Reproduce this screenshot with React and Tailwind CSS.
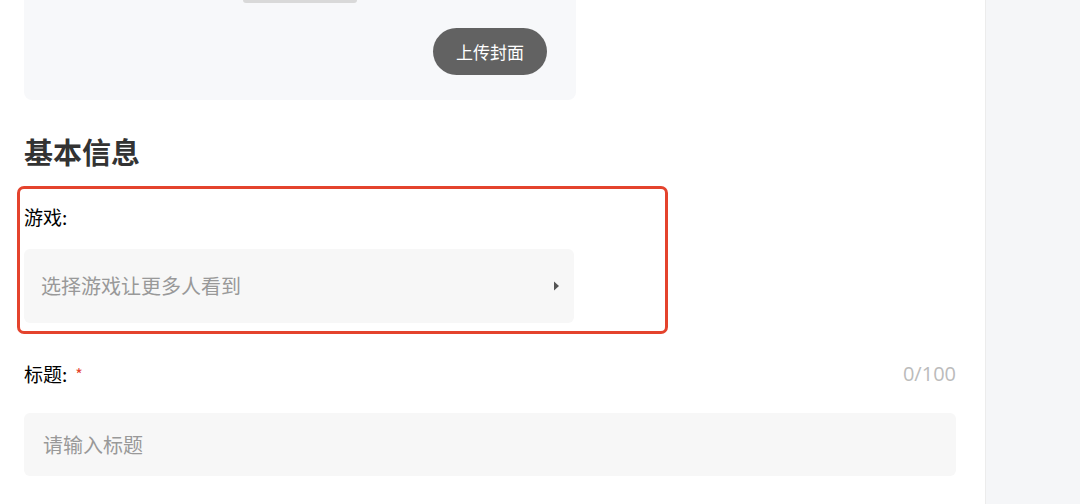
const font = { fontFamily: '"Noto Sans CJK SC", "Noto Sans", sans-serif' };

export default function App() {
  return (
    <div className="flex h-[504px] w-[1080px] overflow-hidden bg-white" style={font}>
      <div className="flex-1 pl-6 pr-[29px]">
        {/* cover */}
        <div className="flex h-[100px] w-[552px] flex-col rounded-b-lg bg-[#f7f8fa]">
          <div className="ml-[219px] h-[3px] w-[114px] rounded-b-md bg-[#d9d9d9]" />
          <button className="mt-[25px] mr-[29px] h-[47px] w-[114px] self-end rounded-full bg-[#626262] text-[17px] text-white">
            上传封面
          </button>
        </div>

        <h2 className="mt-[31px] text-[29px] leading-[40px] font-bold text-[#333]">基本信息</h2>

        {/* game */}
        <div className="relative mt-[15px] w-[552px] pt-[19px] pb-[11px]">
          <div className="text-[19px] leading-[24px] text-black">游戏:</div>
          <div className="mt-[20px] flex h-[74px] w-[550px] items-center justify-between rounded-md bg-[#f7f7f7] pl-[17px] pr-[14px]">
            <span className="text-[20px] text-[#999]">选择游戏让更多人看到</span>
            <svg width="7" height="10" viewBox="0 0 7 10">
              <path d="M1 0.5L6 5L1 9.5Z" fill="#555" />
            </svg>
          </div>
          <div className="absolute top-0 left-[-7px] h-full w-[651px] rounded-[7px] border-[3px] border-[#e4432d]" />
        </div>

        {/* title */}
        <div className="mt-[25px] flex items-center justify-between">
          <div className="flex items-center text-[19px] leading-[24px] text-black">
            标题:<span className="ml-[8px] text-[16px] text-[#e4432d]">*</span>
          </div>
          <span className="text-[20px] text-[#bbb]" style={{ fontFamily: '"Open Sans", sans-serif' }}>0/100</span>
        </div>
        <div className="mt-[24px] flex h-[63px] items-center rounded-md bg-[#f7f7f7] pl-[19px]">
          <span className="text-[20px] text-[#999]">请输入标题</span>
        </div>
      </div>
      <div className="w-[95px] border-l border-[#ececec] bg-[#f5f6f8]" />
    </div>
  );
}
